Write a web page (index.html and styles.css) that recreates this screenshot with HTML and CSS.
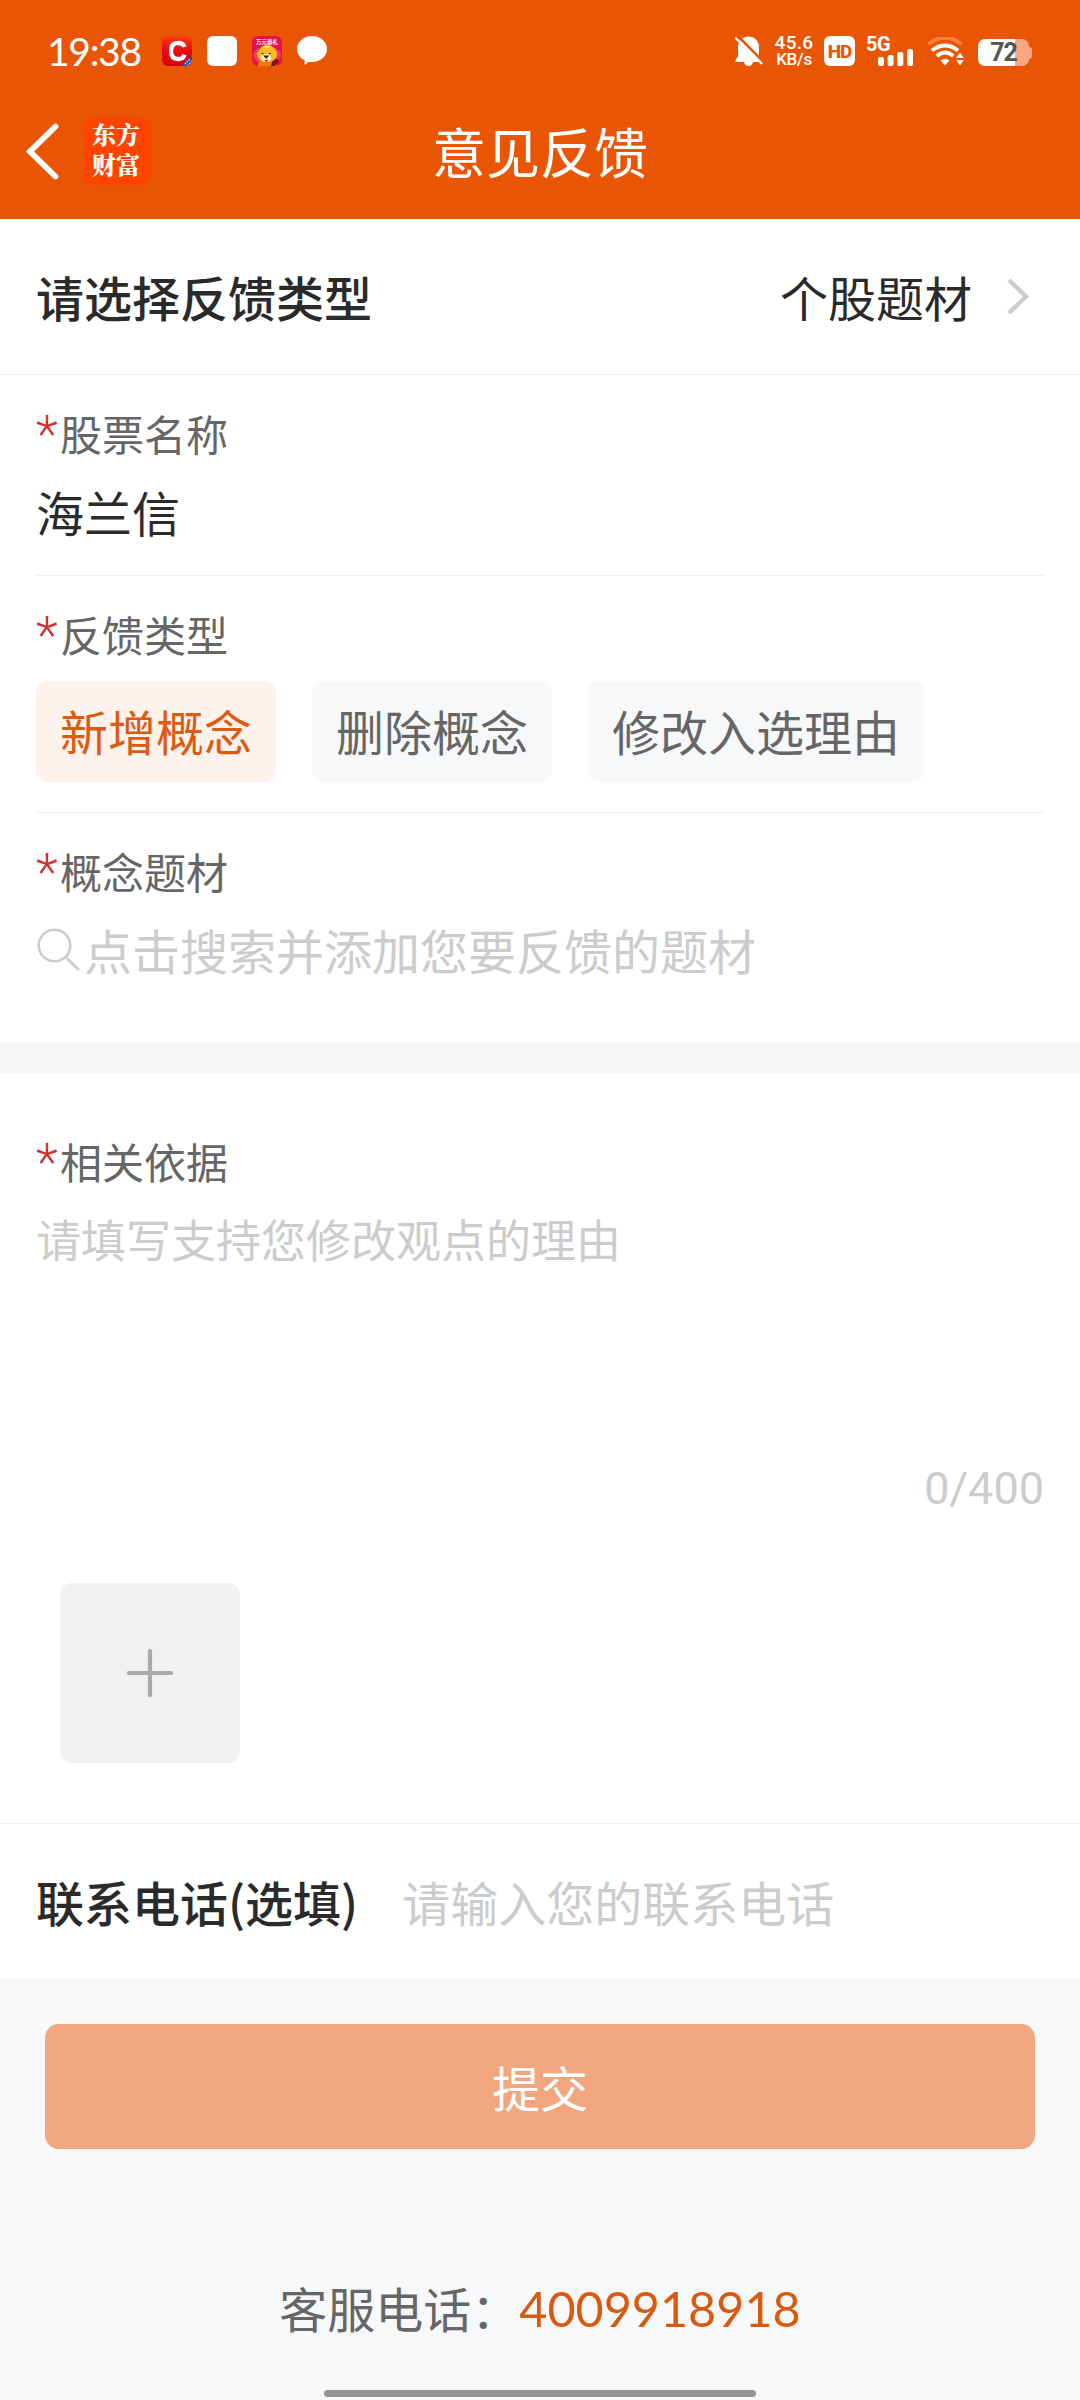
FILE: index.html
```html
<!DOCTYPE html>
<html lang="zh-CN">
<head>
<meta charset="utf-8">
<title>意见反馈</title>
<link rel="stylesheet" href="styles.css">
</head>
<body>
<header class="header">
  <div class="status">
    <div class="status-left">
      <span class="time">19:38</span>
      <svg class="app" viewBox="0 0 30 30">
        <defs>
          <linearGradient id="red" x1="0" y1="0" x2="0" y2="1"><stop offset="0" stop-color="#ff3c14"/><stop offset=".5" stop-color="#e60a12"/><stop offset="1" stop-color="#d4000c"/></linearGradient>
          <clipPath id="tile"><rect width="30" height="30" rx="6"/></clipPath>
        </defs>
        <g clip-path="url(#tile)">
          <rect width="30" height="30" fill="url(#red)"/>
          <path d="M19 30 30 19V30Z" fill="#2f4da0"/>
          <path d="m23 28 5-5M25.500 29.500 30 25" stroke="#c9d3ee" stroke-width="1.200" stroke-dasharray="1.500 1"/>
          <path d="M22.500 11C21.800 8.500 19.500 7 16 7c-4.800 0-7 3-7 8s2.200 8 7 8c3.500 0 5.800-1.500 6.500-4.200" fill="none" stroke="#fff" stroke-width="4.400"/>
        </g>
      </svg>
      <span class="app app-blank"></span>
      <svg class="app" viewBox="0 0 30 30">
        <g clip-path="url(#tile)">
          <rect width="30" height="30" fill="#e5104f"/>
          <ellipse cx="15" cy="19" rx="14" ry="9" fill="#f43a5c"/>
          <path d="M6 30c0-5 3-8 9-8s10 3 10 8Z" fill="#ee7a14"/>
          <path d="M21 23q5-1 6 3l-4 4h-4Z" fill="#7a1a12"/>
          <path d="M5 19c-1-3 2-4 3-6 2-3 4-4 7-4 4 0 6 2 8 4 1 2 3 4 2 6-1 5-5 7-10 7S6 24 5 19Z" fill="#f9ba22"/>
          <path d="M9 12q5-4 11-1-6 1-11 1Z" fill="#ffe15c"/>
          <ellipse cx="14" cy="22" rx="5" ry="4" fill="#fff0c0"/>
          <path d="M9.500 17.500h2M17 17.500h2M12.500 20h3.500l-1.700 2Z" fill="#321" stroke="#321" stroke-width="1.200"/>
          <path d="M12.500 24h4l-2 2.500Z" fill="#d3202a"/>
          <text class="app-caption" x="15" y="7.800" text-anchor="middle" textLength="22">万元豪礼</text>
        </g>
      </svg>
      <svg class="app" viewBox="0 0 30 30"><path d="M15 0c8.300 0 15 5.600 15 13S23.300 26 15 26c-1 0-2-.1-3-.3L7.600 29V24.200C3 22 0 17.800 0 13 0 5.600 6.700 0 15 0Z" fill="#fff"/></svg>
    </div>
    <div class="status-right">
      <svg class="bell" viewBox="0 0 28 31">
        <path d="M13.500.5C19.500.5 24 5 24 11v9l2.500 4.500v1.500H18q-1 4-4.500 4T9 26H.5v-1.500L3 20v-9C3 5 7.500.5 13.500.5Z" fill="#fff"/>
        <path d="m2-1 27 27.500" stroke="#ea5504" stroke-width="2.600"/>
        <path d="m0 1.500 27 26.500" stroke="#fff" stroke-width="2"/>
      </svg>
      <div class="speed"><span>45.6</span><span>KB/s</span></div>
      <div class="hd">HD</div>
      <div class="cell">
        <span class="cell-type">5G</span>
        <svg class="bars" viewBox="0 0 36 17"><g fill="#fff"><rect y="8" width="6" height="9" rx="2"/><rect x="9.600" y="6" width="6" height="11" rx="2"/><rect x="19.300" y="3" width="6" height="14" rx="2"/><rect x="29" width="6" height="17" rx="2"/></g></svg>
      </div>
      <svg class="wifi" viewBox="0 0 37 29" fill="none">
        <path d="M1.500 7Q18-5.500 34.500 7" stroke="#fa8040" stroke-width="4"/>
        <path d="M5 13.500q13-10 26 0" stroke="#fff" stroke-width="3.800"/>
        <path d="M9.800 19q8.200-7 16.400 0" stroke="#fff" stroke-width="3.800"/>
        <path d="M13.500 23.500q4.500-3.500 9 0L18 28.500Z" fill="#fff"/>
        <path d="m33 15.500 3.800 5.500h-7.600ZM33 28.500l3.800-5.500h-7.600Z" fill="#fff"/>
      </svg>
      <div class="battery"><span class="battery-body">72</span><span class="battery-cap"></span></div>
    </div>
  </div>
  <div class="nav">
    <div class="nav-left">
      <svg class="back" viewBox="0 0 34 57"><path d="M29.500 3.500 4 28.500l25.500 25" fill="none" stroke="#fff" stroke-width="5.800" stroke-linecap="round" stroke-linejoin="miter"/></svg>
      <div class="logo"><span>东方</span><span>财富</span></div>
    </div>
    <h1 class="title">意见反馈</h1>
  </div>
</header>

<main>
  <section class="row type-row">
    <span class="row-label">请选择反馈类型</span>
    <span class="type-value">个股题材</span>
    <svg class="chevron" viewBox="0 0 22 37"><path d="m2 2 17 16.500L2 35" fill="none" stroke="#ccc" stroke-width="4.400"/></svg>
  </section>

  <section class="fields">
    <div class="field">
      <div class="label"><i>*</i>股票名称</div>
      <div class="value">海兰信</div>
    </div>
    <div class="field">
      <div class="label"><i>*</i>反馈类型</div>
      <div class="chips">
        <button class="chip chip-active">新增概念</button>
        <button class="chip">删除概念</button>
        <button class="chip">修改入选理由</button>
      </div>
    </div>
    <div class="field field-search">
      <div class="label"><i>*</i>概念题材</div>
      <div class="value search">
        <svg class="search-icon" viewBox="0 0 44 44" fill="none" stroke="#ccc" stroke-width="2.600"><circle cx="17.500" cy="17.500" r="15.800"/><path d="m28.500 29 13.500 13"/></svg>
        <span>点击搜索并添加您要反馈的题材</span>
      </div>
    </div>
  </section>

  <section class="evidence">
    <div class="label"><i>*</i>相关依据</div>
    <div class="reason">请填写支持您修改观点的理由</div>
    <div class="counter">0/400</div>
    <div class="upload"><svg class="plus" viewBox="0 0 46 48"><path d="M2 24h42M23 2v44" stroke="#aaa" stroke-width="4.200" stroke-linecap="round"/></svg></div>
  </section>

  <section class="row contact">
    <span class="row-label">联系电话(选填)</span>
    <span class="contact-hint">请输入您的联系电话</span>
  </section>
</main>

<footer class="footer">
  <button class="submit">提交</button>
  <p class="service"><span class="service-label">客服电话：</span><a class="phone">4009918918</a></p>
  <div class="home-bar"></div>
</footer>
</body>
</html>
```
FILE: styles.css
```css
* { box-sizing: border-box; }

body {
  margin: 0;
  width: 1080px;
  height: 2400px;
  background: #f7f8fa;
  color: #2a2a2a;
  font-family: "Noto Sans CJK SC", sans-serif;
  font-size: 48px;
  line-height: 72px;
  white-space: nowrap;
}

button { border: 0; padding: 0; font: inherit; }

/* header */
.header { height: 219px; background: #ea5504; color: #fff; }

.status {
  display: flex;
  justify-content: space-between;
  height: 102px;
  padding: 0 48px 0 47px;
}
.status-left, .status-right { display: flex; align-items: center; }
.time {
  width: 100px;
  margin-right: 15px;
  font: 39px/48px Lato, sans-serif;
  letter-spacing: -1.3px;
}
.app { width: 30px; height: 30px; margin-right: 15px; }
.app-blank { border-radius: 6px; background: #fff; }
.app-caption { font: bold 5.5px "Noto Sans CJK SC", sans-serif; fill: #fff; }

.bell { width: 28px; height: 31px; }
.speed {
  display: flex;
  flex-direction: column;
  align-items: center;
  width: 40px;
  margin-left: 11px;
  font: 500 19px/16px Roboto, sans-serif;
  letter-spacing: 0.3px;
}
.speed span:last-child { font-size: 17px; letter-spacing: -0.3px; }
.hd {
  width: 31px;
  height: 30px;
  margin-left: 10px;
  border-radius: 6px;
  background: #fff;
  color: #ea5504;
  font: 800 19px/31px Roboto, sans-serif;
  letter-spacing: -1px;
  text-align: center;
}
.cell {
  display: flex;
  flex-direction: column;
  width: 48px;
  height: 30px;
  margin-left: 11px;
}
.cell-type { height: 13px; font: bold 20px/16px Roboto, sans-serif; letter-spacing: -0.5px; }
.bars { width: 36px; height: 17px; margin-left: 12px; }
.wifi { width: 37px; height: 29px; margin-left: 13px; }
.battery { display: flex; align-items: center; margin: 3px 0 0 14px; }
.battery-body {
  width: 51px;
  height: 27px;
  border-radius: 7px;
  background: linear-gradient(90deg, #fff 37px, #f9a882 37px);
  color: #555;
  font: bold 25px/28px Roboto, sans-serif;
  letter-spacing: -1px;
  text-align: center;
}
.battery-cap { width: 3px; height: 12px; border-radius: 0 3px 3px 0; background: #f9a882; }

.nav {
  display: grid;
  grid-template-columns: 1fr auto 1fr;
  align-items: center;
  height: 98px;
  padding: 0 26px;
}
.nav-left { display: flex; align-items: center; }
.back { width: 34px; height: 57px; }
.logo {
  display: flex;
  flex-direction: column;
  align-items: center;
  width: 68px;
  height: 68px;
  margin-left: 23px;
  padding: 2px 2px 0 0;
  border-radius: 13px;
  background: #ff4400;
  font-family: "Noto Serif CJK SC", "Noto Sans CJK SC", sans-serif;
  font-weight: 900;
  font-size: 24px;
  line-height: 30px;
}
.title { margin: 0; font-weight: 400; font-size: 54px; }

/* form */
main { background: #fff; }
.row { display: flex; align-items: center; padding: 0 36px 1px; }
.row-label { font-weight: 500; }
.type-row { height: 156px; border-bottom: 1px solid #eee; }
.type-value { margin-left: auto; }
.chevron { width: 22px; height: 37px; margin: 0 15px 0 35px; }

.fields { padding: 0 36px; border-bottom: 30px solid #f6f7f9; }
.field { padding: 28px 0; border-bottom: 1px solid #eee; }
.field:nth-child(2) { padding-bottom: 30px; }
.field-search { padding-bottom: 58px; border: 0; }
.label {
  display: flex;
  height: 60px;
  color: #666;
  font-size: 42px;
  line-height: 60px;
}
.label i {
  width: 24px;
  color: #d03030;
  font-family: Roboto, sans-serif;
  font-weight: 300;
  font-size: 51px;
  font-style: normal;
  line-height: 64px;
}
.value { margin-top: 12px; }

.chips { display: flex; gap: 36px; margin-top: 17px; }
.chip {
  height: 101px;
  padding: 0 24px 3px;
  border-radius: 12px;
  background: #f7f8fa;
  color: #666;
}
.chip-active { background: #fdf2ec; color: #dc5a12; }

.search { display: flex; align-items: center; color: #ccc; }
.search-icon { width: 44px; height: 44px; margin: 1px 3px 0 1px; }

.evidence { height: 751px; padding: 58px 36px 0; border-bottom: 1px solid #eee; }
.reason { height: 254px; margin-top: 14px; color: #ccc; font-size: 45px; line-height: 68px; }
.counter { color: #ccc; font: 45px/60px Roboto, sans-serif; text-align: right; }
.upload {
  display: flex;
  align-items: center;
  justify-content: center;
  width: 180px;
  height: 180px;
  margin: 64px 0 0 24px;
  border-radius: 12px;
  background: #f1f1f4;
}
.plus { width: 46px; height: 48px; }

.contact { height: 155px; }
.contact-hint { margin-left: 44px; color: #ccc; }

/* footer */
.footer { display: flex; flex-direction: column; align-items: center; padding-top: 45px; }
.submit {
  width: 990px;
  height: 125px;
  padding-bottom: 2px;
  border-radius: 14px;
  background: #f1a680;
  color: #fff;
}
.service { display: flex; height: 72px; margin: 122px 0 0; color: #666; }
.service-label { width: 240px; }
.phone { color: #d9590f; font-family: Lato, sans-serif; font-size: 48.5px; line-height: 75px; }
.home-bar { width: 432px; height: 7px; margin-top: 47px; border-radius: 4px; background: #949494; }
```
